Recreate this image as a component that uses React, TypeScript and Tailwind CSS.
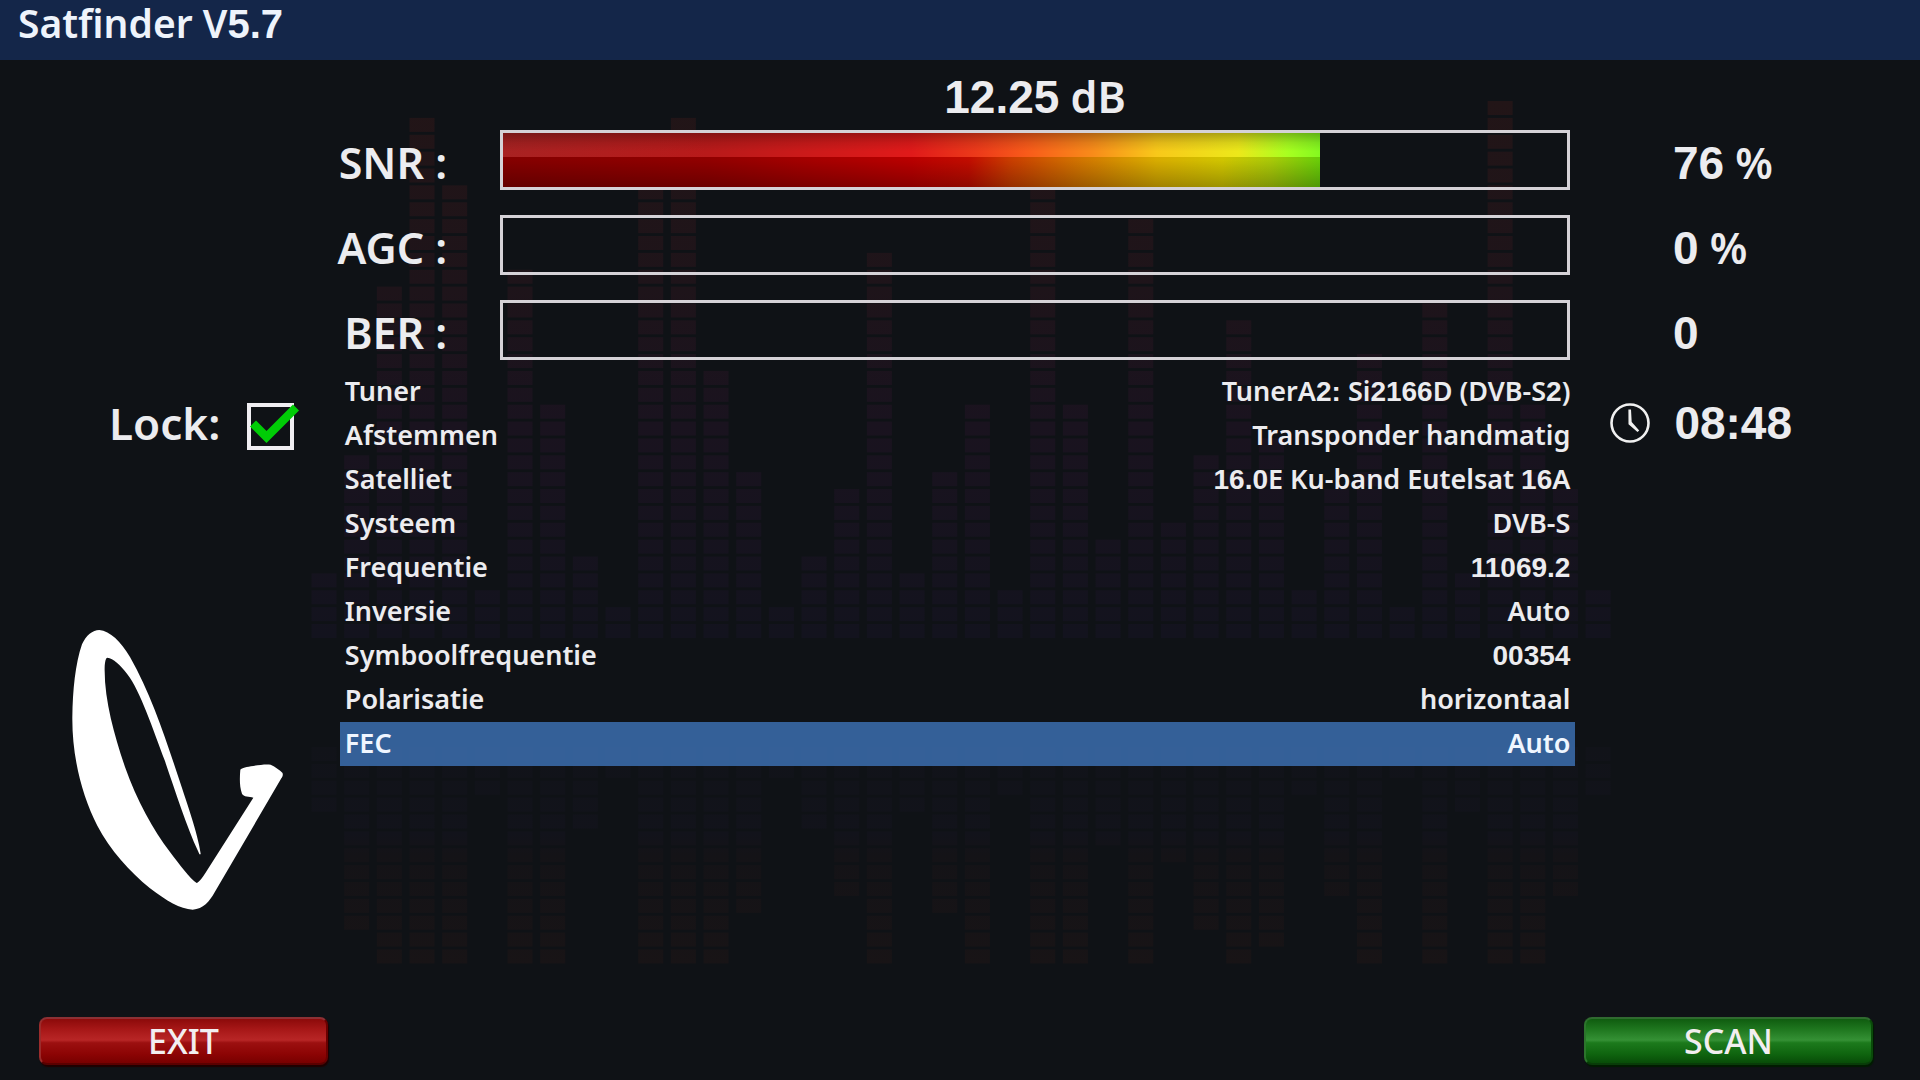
const meters = [
  { label: "SNR :", value: "76 %", level: 76.8 },
  { label: "AGC :", value: "0 %", level: 0 },
  { label: "BER :", value: "0", level: 0 },
];

const settings = [
  { name: "Tuner", value: "TunerA2: Si2166D (DVB-S2)" },
  { name: "Afstemmen", value: "Transponder handmatig" },
  { name: "Satelliet", value: "16.0E Ku-band Eutelsat 16A" },
  { name: "Systeem", value: "DVB-S" },
  { name: "Frequentie", value: "11069.2" },
  { name: "Inversie", value: "Auto" },
  { name: "Symboolfrequentie", value: "00354" },
  { name: "Polarisatie", value: "horizontaal" },
  { name: "FEC", value: "Auto", selected: true },
];

// number of blocks in every equalizer column
const columns = [
  4, 11, 21, 31, 27, 3, 22, 14, 5, 2, 28, 31, 16, 10, 2, 5, 9, 23, 4, 10, 14, 3,
  28, 14, 6, 25, 7, 11, 19, 12, 3, 9, 17, 2, 20, 4, 32, 14, 9, 3,
];

const pitchX = 32.67;
const pitchY = 16.87;

function Equalizer() {
  return (
    <svg
      className="absolute inset-0 h-full w-full"
      viewBox="0 0 1920 1080"
      preserveAspectRatio="none"
      aria-hidden="true"
    >
      <defs>
        <linearGradient id="bars" gradientUnits="userSpaceOnUse" x1="0" y1="100" x2="0" y2="637">
          <stop offset="0" stopColor="#221517" />
          <stop offset="0.35" stopColor="#1e141a" />
          <stop offset="0.6" stopColor="#1a131f" />
          <stop offset="1" stopColor="#13131e" />
        </linearGradient>
        <linearGradient id="mirror" gradientUnits="userSpaceOnUse" x1="0" y1="746" x2="0" y2="965">
          <stop offset="0" stopColor="#111319" />
          <stop offset="0.4" stopColor="#12131b" />
          <stop offset="0.5" stopColor="#141317" />
          <stop offset="1" stopColor="#181416" />
        </linearGradient>
      </defs>
      {columns.map((count, i) => {
        const x = 311.5 + i * pitchX;
        return (
          <g key={i}>
            {Array.from({ length: count }, (_, n) => (
              <rect key={n} x={x} y={638 - n * pitchY - 14} width="25" height="14" fill="url(#bars)" />
            ))}
            {Array.from({ length: Math.min(count, 13) }, (_, n) => (
              <rect key={n} x={x} y={747 + n * pitchY} width="25" height="14" fill="url(#mirror)" />
            ))}
          </g>
        );
      })}
    </svg>
  );
}

// digits are set in a heavier face than the letters
function Mixed({ text, big }: { text: string; big?: boolean }) {
  return text.split(/([0-9][0-9.:]*)/).map((part, i) =>
    i % 2 ? (
      <span
        key={i}
        className={
          big
            ? "font-['Liberation_Sans',sans-serif] text-[46px] leading-none font-bold"
            : "font-['Liberation_Sans',sans-serif] text-[28px] leading-none font-bold"
        }
      >
        {part}
      </span>
    ) : (
      part
    ),
  );
}

function Meter({ label, value, level }: { label: string; value: string; level: number }) {
  return (
    <div className="flex h-15 items-center text-[43px] leading-[52px]">
      <div className="w-[26.05%] pt-1.5 pr-[53px] text-right">{label}</div>
      <div
        role="progressbar"
        aria-label={label}
        aria-valuenow={level}
        className="h-full flex-1 border-3 border-[#d5d2d7]"
      >
        <div className="relative flex h-full flex-col" style={{ width: `${level}%` }}>
          <div className="h-[44%] bg-[linear-gradient(90deg,#a82222_0%,#b81a1a_25%,#e01a1a_50%,#ec3a1a_58%,#f85a1a_64%,#f88a1a_72%,#f8c81a_80%,#ece81a_90%,#a8ff20_96%,#84f820_100%)]" />
          <div className="flex-1 bg-[linear-gradient(90deg,#840000_0%,#900000_25%,#b80000_50%,#c00c00_57%,#c83c00_62%,#d07000_70%,#d8ac00_80%,#d0c400_88%,#a8c808_94%,#68cc08_100%)]" />
          <div className="absolute inset-0 bg-[linear-gradient(180deg,#00000048_0%,#00000018_18%,#00000000_34%,#00000000_50%,#00000040_100%)]" />
        </div>
      </div>
      <div className="w-[18.23%] pt-1.5 pl-[103px] whitespace-nowrap">
        <Mixed text={value} big />
      </div>
    </div>
  );
}

function Clock() {
  return (
    <svg className="h-10 w-10" viewBox="0 0 40 40" fill="none" aria-hidden="true">
      <circle cx="20" cy="20" r="18.5" stroke="#f0f0f0" strokeWidth="2.6" />
      <path d="M18.4 6.5h2.6l.7 12.6 7.5 8.4-1.7 1.6-9-7.8z" fill="#f0f0f0" />
    </svg>
  );
}

function Logo() {
  return (
    <svg className="ml-[72px] h-[280px] w-[212px]" viewBox="96 89 636 840" aria-hidden="true">
      <path
        fill="#fff"
        fillRule="evenodd"
        d="M178 89C210 91 243 125 270 170C330 275 372 400 410 515C438 600 474 700 482 760C480 766 477 760 474 752C440 680 405 570 374 480C340 390 300 270 262 222C240 192 220 175 202 172C197 172 195 185 194 200C192 300 225 410 255 500C290 600 340 690 390 755C420 795 450 835 470 848C478 846 490 828 500 812L640 592C628 588 610 590 606 580C598 560 599 530 601 508C606 502 620 500 640 497C660 493 680 491 692 493C706 500 720 509 727 517C730 522 728 528 724 534L524 876C508 904 490 926 458 928C420 926 380 902 330 864C270 814 210 750 172 676C126 586 96 470 97 350C98 270 106 190 126 132C138 105 158 89 178 89Z"
      />
    </svg>
  );
}

export default function App() {
  return (
    <div className="relative flex min-h-screen flex-col bg-[#0f1216] font-['Noto_Sans',sans-serif] font-semibold text-[#ececef]">
      <Equalizer />

      <header className="relative h-15 bg-[#142649] px-[18px]">
        <h1 className="pt-[3px] text-[39px] leading-10 font-semibold text-[#eef3fb]">
          Satfinder V<span className="font-['Liberation_Sans',sans-serif] text-[40px] leading-none font-bold">5.7</span>
        </h1>
      </header>

      <main className="relative flex flex-1 flex-col">
        <div className="flex h-[70px] pt-[11px] text-[43px] leading-[52px]">
          <div className="w-[26.05%]" />
          <div className="flex-1 text-center">
            <Mixed text="12.25 dB" big />
          </div>
          <div className="w-[18.23%]" />
        </div>

        <div className="flex flex-col gap-[25px]">
          {meters.map((m) => (
            <Meter key={m.label} {...m} />
          ))}
        </div>

        <div className="flex pt-[10px]">
          <div className="flex w-[17.7%] flex-col">
            <div className="flex items-center pt-[25px] pl-[109px]">
              <label htmlFor="lock" className="w-[138px] text-[44px] leading-[52px]">
                Lock:
              </label>
              <div className="relative mt-2 h-[47px] w-[47px]">
                <input
                  id="lock"
                  type="checkbox"
                  defaultChecked
                  className="peer block h-full w-full appearance-none border-4 border-[#f0eef2]"
                />
                <svg
                  className="pointer-events-none absolute top-0 left-0 hidden h-[47px] w-[54px] peer-checked:block"
                  viewBox="0 0 54 47"
                  fill="none"
                  aria-hidden="true"
                >
                  <path d="M6 20.5L19.5 34L49 4.5" stroke="#00cc06" strokeWidth="8.5" />
                </svg>
              </div>
            </div>
            <div className="pt-[180px]">
              <Logo />
            </div>
          </div>

          <table className="h-fit flex-1 border-collapse text-[27px] leading-8">
            <tbody>
              {settings.map((s) => (
                <tr
                  key={s.name}
                  className={s.selected ? "h-11 bg-[#3d72b5d0] text-[#f0f6ff]" : "h-11"}
                >
                  <th scope="row" className="pb-0.5 pl-[5px] text-left font-semibold">
                    {s.name}
                  </th>
                  <td className="pr-[5px] pb-0.5 text-right">
                    <Mixed text={s.value} />
                  </td>
                </tr>
              ))}
            </tbody>
          </table>

          <div className="flex w-[17.95%] items-start gap-6 pt-[33px] pl-[35px]">
            <Clock />
            <time className="font-['Liberation_Sans',sans-serif] text-[46px] leading-10 font-bold">
              08:48
            </time>
          </div>
        </div>
      </main>

      <footer className="relative flex justify-between pr-[47px] pb-[15px] pl-[39px] text-[34px] font-medium text-[#f2eef0]">
        <button className="h-12 w-[289px] rounded-lg border-2 border-t-[#8c3034] border-r-[#6a0000] border-b-[#5a0000] border-l-[#9a2c2c] bg-[linear-gradient(180deg,#8c0a0a_0%,#a81818_25%,#b82626_48%,#9c1010_54%,#8c0404_80%,#780000_100%)] leading-none shadow-[1px_2px_1px_#200000]">
          EXIT
        </button>
        <button className="h-12 w-[289px] rounded-lg border-2 border-t-[#306a30] border-r-[#0a4a0a] border-b-[#083c08] border-l-[#2c742c] bg-[linear-gradient(180deg,#0f5c0f_0%,#207820_25%,#359135_48%,#1c7a1c_54%,#0f640f_80%,#084c08_100%)] leading-none shadow-[1px_2px_1px_#001c00]">
          SCAN
        </button>
      </footer>
    </div>
  );
}
